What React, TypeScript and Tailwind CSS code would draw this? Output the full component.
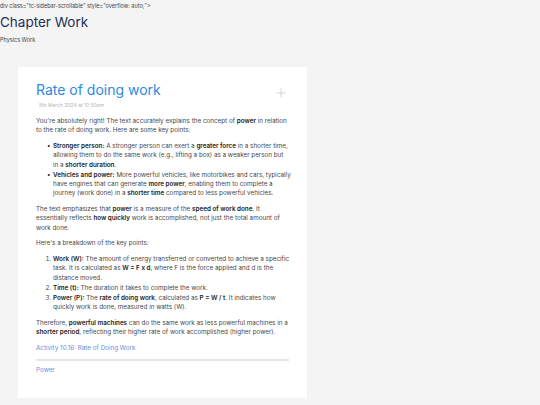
function B({ children }: { children: React.ReactNode }) {
  return <b className="font-semibold text-[#222]">{children}</b>;
}

function Bullet({ children }: { children: React.ReactNode }) {
  return (
    <li className="flex">
      <span className="w-[6px] shrink-0 text-[#333]">•</span>
      <div>{children}</div>
    </li>
  );
}

export default function App() {
  return (
    <div
      className="min-h-screen bg-[#f4f4f4] text-[#333]"
      style={{ fontFamily: "Inter, 'Noto Sans', sans-serif" }}
    >
      <p className="pt-[2px] text-[5.5px] leading-[9px] text-[#444]">
        div class="tc-sidebar-scrollable" style="overflow: auto;"&gt;
      </p>
      <h1 className="mt-[1px] text-[13.5px] leading-[20px] text-[#22305a]">Chapter Work</h1>
      <p className="mt-[4px] text-[5.5px] leading-[8px] text-[#444]">Physics Work</p>

      <div className="mx-[18px] mt-[23px] w-[289px] bg-white px-[18px] pt-[12px] pb-[23px]">
        <div className="flex items-start justify-between">
          <h2 className="text-[14px] leading-[22px] text-[#3088e2]">Rate of doing work</h2>
          <svg className="mt-[9px] mr-[3px]" width="10" height="10" viewBox="0 0 10 10">
            <path d="M5 0.5V9.5M0.5 5H9.5" stroke="#cfcfcf" strokeWidth="0.9" />
          </svg>
        </div>
        <p className="mt-[0px] pl-[3px] text-[5px] leading-[8px] text-[#b4b4b4]">5th March 2024 at 10:50am</p>

        <div className="mt-[8px] whitespace-nowrap text-[6.3px] leading-[9.4px] text-[#474747]">
          <p>
            You're absolutely right! The text accurately explains the concept of <B>power</B> in relation
            <br />
            to the rate of doing work. Here are some key points:
          </p>
          <ul className="mt-[6px] space-y-[0.5px] pl-[11px]">
            <Bullet>
              <B>Stronger person:</B> A stronger person can exert a <B>greater force</B> in a shorter time,
              <br />
              allowing them to do the same work (e.g., lifting a box) as a weaker person but
              <br />
              in a <B>shorter duration</B>.
            </Bullet>
            <Bullet>
              <B>Vehicles and power:</B> More powerful vehicles, like motorbikes and cars, typically
              <br />
              have engines that can generate <B>more power</B>, enabling them to complete a
              <br />
              journey (work done) in a <B>shorter time</B> compared to less powerful vehicles.
            </Bullet>
          </ul>
          <p className="mt-[6px]">
            The text emphasizes that <B>power</B> is a measure of the <B>speed of work done</B>. It
            <br />
            essentially reflects <B>how quickly</B> work is accomplished, not just the total amount of
            <br />
            work done.
          </p>
          <p className="mt-[6px]">Here's a breakdown of the key points:</p>
          <ol className="mt-[6.5px] list-decimal space-y-[0.5px] pl-[17px]">
            <li>
              <B>Work (W):</B> The amount of energy transferred or converted to achieve a specific
              <br />
              task. It is calculated as <B>W = F x d</B>, where F is the force applied and d is the
              <br />
              distance moved.
            </li>
            <li>
              <B>Time (t):</B> The duration it takes to complete the work.
            </li>
            <li>
              <B>Power (P):</B> The <B>rate of doing work</B>, calculated as <B>P = W / t</B>. It indicates how
              <br />
              quickly work is done, measured in watts (W).
            </li>
          </ol>
          <p className="mt-[6.5px]">
            Therefore, <B>powerful machines</B> can do the same work as less powerful machines in a
            <br />
            <B>shorter period</B>, reflecting their higher rate of work accomplished (higher power).
          </p>
          <p className="mt-[6.5px] text-[#6a8fd8]">Activity 10.16: Rate of Doing Work</p>
          <div className="mt-[5px] h-[2px] bg-[#e6e6e6]" />
          <p className="mt-[5px] text-[#6a8fd8]">Power</p>
        </div>
      </div>
    </div>
  );
}
